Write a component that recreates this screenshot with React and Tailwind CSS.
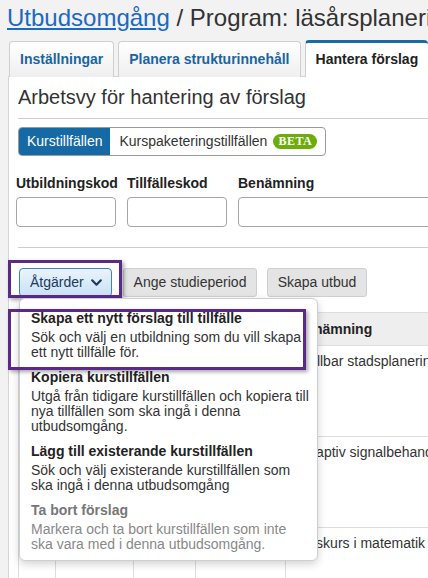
export default function App() {
    const items = [
        {
            title: "Skapa ett nytt förslag till tillfälle",
            desc: "Sök och välj en utbildning som du vill skapa ett nytt tillfälle för.",
        },
        {
            title: "Kopiera kurstillfällen",
            desc: "Utgå från tidigare kurstillfällen och kopiera till nya tillfällen som ska ingå i denna utbudsomgång.",
        },
        {
            title: "Lägg till existerande kurstillfällen",
            desc: "Sök och välj existerande kurstillfällen som ska ingå i denna utbudsomgång",
        },
        {
            title: "Ta bort förslag",
            desc: "Markera och ta bort kurstillfällen som inte ska vara med i denna utbudsomgång.",
            disabled: true,
        },
    ]

    const rows = ["Hållbar stadsplanering", "Adaptiv signalbehandling", "Baskurs i matematik"]

    return (
        <div className="w-[428px] h-[578px] overflow-hidden bg-[#f2f2f2] text-[#333] font-['Liberation_Sans',Arial,sans-serif]">
            {/* Page title */}
            <h1 className="pl-[7px] pt-[4px] text-[24px] leading-[28px] whitespace-nowrap">
                <a className="text-[#1a69c4] underline">Utbudsomgång</a> / Program: läsårsplanering
            </h1>

            {/* Tabs */}
            <div className="flex items-end gap-[4px] pl-[9px] mt-[9px] h-[36px] relative z-10 -mb-px">
                <div className="h-[36px] px-[10px] flex items-center border border-b-0 border-[#cfcfcf] rounded-t-[4px] bg-linear-to-b from-white to-[#efefef] text-[14px] font-bold text-[#1a64a0] whitespace-nowrap">
                    Inställningar
                </div>
                <div className="h-[36px] px-[10px] flex items-center border border-b-0 border-[#cfcfcf] rounded-t-[4px] bg-linear-to-b from-white to-[#efefef] text-[14px] font-bold text-[#1a64a0] whitespace-nowrap">
                    Planera strukturinnehåll
                </div>
                <div className="h-[37px] px-[10px] flex items-center border-l border-[#cfcfcf] border-t-[3px] border-t-[#1b6aa5] rounded-t-[4px] bg-white text-[14px] font-bold text-[#222] whitespace-nowrap flex-1 pb-[1px]">
                    Hantera förslag
                </div>
            </div>

            {/* Panel */}
            <div className="ml-[8px] bg-white border-l border-t border-[#d6d6d6] pl-[9px] pt-[8px] h-[600px]">
                <h2 className="text-[20px] leading-[24px] whitespace-nowrap">Arbetsvy för hantering av förslag</h2>
                <div className="mt-[9px] border-t border-[#cccccc]" />

                {/* Segmented toggle */}
                <div className="mt-[8px] inline-flex h-[29px] border border-[#9a9a9a] rounded-[4px] overflow-hidden text-[14px]">
                    <span className="bg-[#1569a4] text-white px-[8px] flex items-center">Kurstillfällen</span>
                    <span className="pl-[9px] pr-[8px] flex items-center gap-[6px]">
                        Kurspaketeringstillfällen
                        <span className="h-[15px] w-[44px] rounded-[8px] bg-[#6cad0b] text-white font-bold text-[12px] leading-[15px] text-center font-['Liberation_Serif',serif] tracking-[0.5px]">
                            BETA
                        </span>
                    </span>
                </div>

                {/* Filters */}
                <div className="-ml-[2px] mt-[19px] grid grid-cols-[100px_100px_260px] gap-x-[11px] whitespace-nowrap">
                    <label className="text-[14px] leading-[16px] font-bold text-[#222]">Utbildningskod</label>
                    <label className="text-[14px] leading-[16px] font-bold text-[#222]">Tillfälleskod</label>
                    <label className="text-[14px] leading-[16px] font-bold text-[#222]">Benämning</label>
                    <input className="mt-[6px] h-[30px] border border-[#a5a5a5] rounded-[4px]" />
                    <input className="mt-[6px] h-[30px] border border-[#a5a5a5] rounded-[4px]" />
                    <input className="mt-[6px] h-[30px] border border-[#a5a5a5] rounded-[4px]" />
                </div>

                <div className="mt-[20px] border-t border-[#cccccc]" />

                {/* Action buttons */}
                <div className="mt-[20px] ml-[1px] flex items-center text-[14px] relative z-20">
                    <div className="relative">
                        <button className="h-[29px] w-[93px] pl-[10px] flex items-center gap-[6px] border border-[#3d83c4] rounded-[4px] bg-linear-to-b from-[#eaf4fc] to-[#c8e1f5] text-[#1b3a5e]">
                            Åtgärder
                            <svg width="13" height="13" viewBox="0 0 24 24" fill="none" stroke="currentColor" strokeWidth="4" strokeLinecap="round" strokeLinejoin="round" aria-hidden="true">
                                <path d="M4 8l8 8 8-8" />
                            </svg>
                        </button>
                        {/* highlight around button */}
                        <div className="absolute left-[-11px] top-[-8px] w-[114px] h-[38px] border-[3px] border-[#5b2a86] shadow-[2px_2px_4px_rgba(0,0,0,0.35)] pointer-events-none" />

                        {/* Dropdown menu */}
                        <div className="absolute left-0 top-full mt-[1px] w-[299px] bg-white border border-[#cfcfcf] rounded-[6px] shadow-[0_3px_8px_rgba(0,0,0,0.18)] pl-[11px] pt-[6px] pb-[4px]">
                            {items.map((it) => (
                                <div key={it.title} className="py-[4px]">
                                    <div className={`text-[14px] leading-[18px] font-bold whitespace-nowrap ${it.disabled ? "text-[#777]" : "text-[#222]"}`}>
                                        {it.title}
                                    </div>
                                    <div className={`mt-[3px] w-[278px] text-[14px] leading-[15px] ${it.disabled ? "text-[#888]" : "text-[#333]"}`}>
                                        {it.desc}
                                    </div>
                                </div>
                            ))}
                            {/* highlight around first item */}
                            <div className="absolute left-[-12px] top-[10px] w-[298px] h-[61px] border-[3px] border-[#5b2a86] shadow-[2px_2px_4px_rgba(0,0,0,0.35)] pointer-events-none" />
                        </div>
                    </div>
                    <button className="ml-[11px] h-[29px] w-[134px] border border-[#cfcfcf] rounded-[3px] bg-[#e4e4e4] text-[#333]">
                        Ange studieperiod
                    </button>
                    <button className="ml-[10px] h-[29px] w-[100px] border border-[#cfcfcf] rounded-[3px] bg-[#e4e4e4] text-[#333]">
                        Skapa utbud
                    </button>
                </div>

                {/* Table */}
                <div className="mt-[15px] border-t border-[#dddddd] text-[14px] whitespace-nowrap">
                    <div className="grid grid-cols-[37px_78px_62px_90px_1fr] h-[33px] bg-[#eeeeee] border-b border-[#dddddd]">
                        <div className="border-l border-[#dddddd]" />
                        <div className="border-l border-[#dddddd]" />
                        <div className="border-l border-[#dddddd]" />
                        <div className="border-l border-[#dddddd]" />
                        <div className="border-l border-[#dddddd] pl-[10px] flex items-center font-bold text-[#222]">Benämning</div>
                    </div>
                    {rows.map((r) => (
                        <div key={r} className="grid grid-cols-[37px_78px_62px_90px_1fr] h-[91px] border-b border-[#dddddd]">
                            <div className="border-l border-[#dddddd]" />
                            <div className="border-l border-[#dddddd]" />
                            <div className="border-l border-[#dddddd]" />
                            <div className="border-l border-[#dddddd]" />
                            <div className="border-l border-[#dddddd] pl-[13px] pt-[7px] leading-[16px]">{r}</div>
                        </div>
                    ))}
                </div>
            </div>
        </div>
    )
}
